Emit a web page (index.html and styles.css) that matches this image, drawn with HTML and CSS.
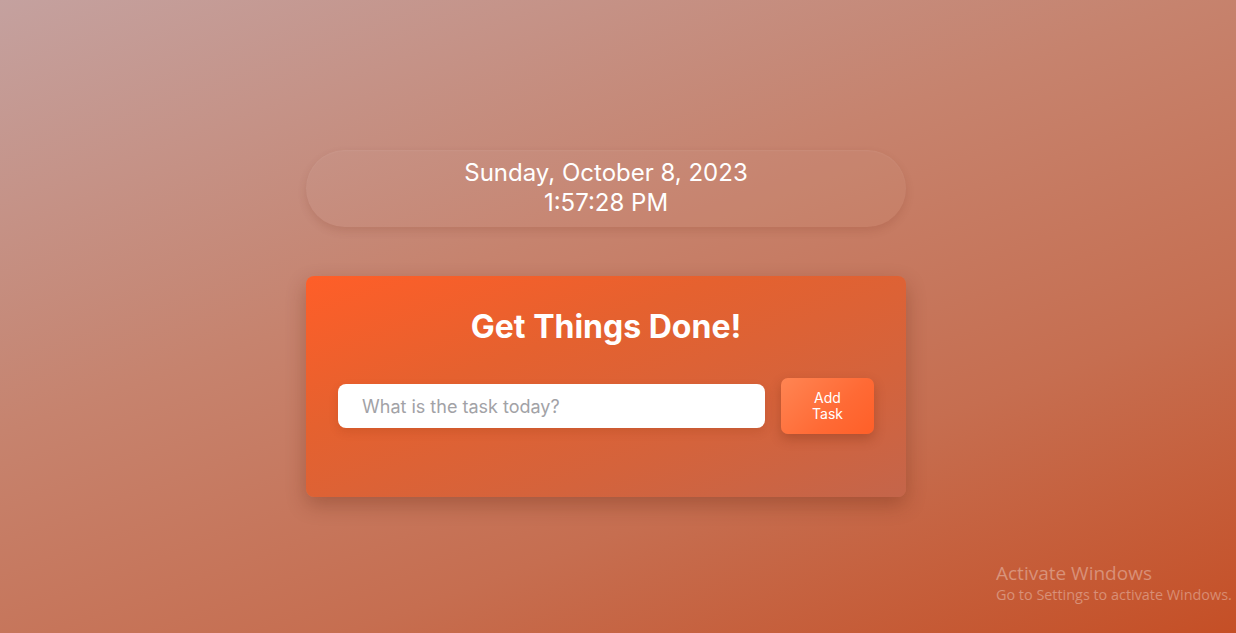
FILE: index.html
```html
<!DOCTYPE html>
<html>
<head>
<meta charset="utf-8">
<link rel="stylesheet" href="styles.css">
</head>
<body>
<main class="page">
  <div class="clock">
    <div class="clock-date">Sunday, October 8, 2023</div>
    <div class="clock-time">1:57:28 PM</div>
  </div>
  <section class="card">
    <h1 class="title">Get Things Done!</h1>
    <form class="task-form">
      <input class="task-input" type="text" placeholder="What is the task today?">
      <button class="task-btn" type="button">Add<br>Task</button>
    </form>
  </section>
</main>
<div class="activate">
  <div class="activate-title">Activate Windows</div>
  <div class="activate-sub">Go to Settings to activate Windows.</div>
</div>
</body>
</html>
```
FILE: styles.css
```css
html, body {
  margin: 0;
  height: 100%;
}
body {
  font-family: Inter, "Noto Sans", sans-serif;
  background: linear-gradient(160deg, #c4a19f 0%, #c6836e 40%, #c66e50 70%, #c54f26 100%);
  overflow: hidden;
}
.page {
  display: flex;
  flex-direction: column;
  align-items: center;
  padding-top: 150px;
  padding-right: 24px;
}
.clock {
  width: 600px;
  height: 77px;
  box-sizing: border-box;
  border-radius: 40px;
  background: rgba(255, 255, 255, 0.03);
  box-shadow: 0 4px 8px rgba(120, 50, 30, 0.16), inset 0 1px 2px rgba(255,255,255,0.06);
  color: #fff;
  text-align: center;
  font-size: 24px;
  line-height: 30px;
  padding-top: 8px;
}
.card {
  margin-top: 49px;
  width: 600px;
  height: 221px;
  box-sizing: border-box;
  border-radius: 8px;
  background: linear-gradient(160deg, #ff5e28 0%, #e5612f 35%, #d4633c 70%, #c4654a 100%);
  box-shadow: 0 8px 20px rgba(90, 30, 10, 0.3);
  padding: 30px 32px 0;
}
.title {
  margin: 0;
  text-align: center;
  color: #fff;
  font-size: 32px;
  font-weight: 700;
  line-height: 42px;
}
.task-form {
  margin-top: 30px;
  display: flex;
  align-items: center;
  gap: 16px;
}
.task-input {
  width: 427px;
  height: 44px;
  box-sizing: border-box;
  border: none;
  border-radius: 8px;
  background: #fff;
  padding: 0 24px;
  font-family: Inter, sans-serif;
  font-size: 18px;
  outline: none;
  box-shadow: 0 4px 10px rgba(120, 40, 10, 0.15);
}
.task-input::placeholder {
  color: #a2a2a6;
}
.task-btn {
  width: 93px;
  height: 56px;
  border: none;
  border-radius: 7px;
  background: linear-gradient(135deg, #ff8553 0%, #ff6a35 60%, #ff5f28 100%);
  color: #fff;
  font-family: Inter, sans-serif;
  font-size: 14px;
  line-height: 16px;
  box-shadow: 0 5px 12px rgba(110, 35, 10, 0.3);
  padding: 0;
}
.activate {
  position: absolute;
  left: 996px;
  top: 562px;
  color: rgba(255, 255, 255, 0.34);
  font-family: "Open Sans", "Noto Sans", sans-serif;
}
.activate-title {
  font-size: 19px;
  line-height: 23px;
}
.activate-sub {
  font-size: 14.4px;
  line-height: 20px;
}
```
